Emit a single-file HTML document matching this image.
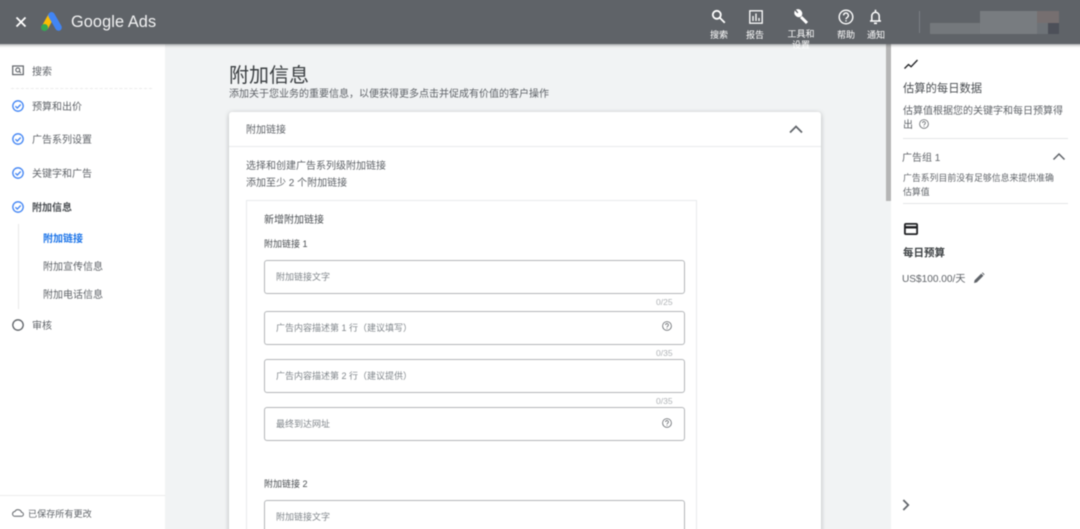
<!DOCTYPE html>
<html lang="zh-CN"><head><meta charset="utf-8"><title>附加信息</title>
<style>
html,body{margin:0;padding:0;width:1080px;height:529px;overflow:hidden;background:#f1f3f4}
body{position:relative;font-family:"Liberation Sans","Noto Sans CJK SC",sans-serif;color:#5f6368}
#w{position:absolute;left:0;top:0;width:1080px;height:529px;filter:blur(.45px)}
.t{position:absolute;white-space:nowrap;line-height:16px;font-size:10px}
.b{position:absolute}
svg{position:absolute;overflow:visible}
.inp{position:absolute;left:264px;width:419px;height:32px;border:1px solid #b4b6b9;border-radius:3px;background:#fff}
.ph{color:#80868b;font-size:9px}
.cnt{color:#b0b3b6;font-size:8.5px}
.hd{color:#fff;font-size:9px;text-align:center}
</style></head><body><div id="w">

<div class="b" style="left:-6px;top:44px;width:171px;height:491px;background:#fff"></div>
<div class="b" style="left:891px;top:44px;width:195px;height:491px;background:#fff"></div>
<div class="b" style="left:886px;top:44px;width:5px;height:157px;background:#b5b5b5"></div>

<!-- sidebar -->
<svg style="left:12px;top:65px" width="13" height="12" viewBox="0 0 13 12" fill="none" stroke="#5f6368"><rect x=".7" y="1" width="10.6" height="8.6" stroke-width="1.2"/><circle cx="5.8" cy="4.9" r="2" stroke-width="1.1"/><path d="M7.300 6.400l1.600 1.600" stroke-width="1.1"/></svg>
<div class="t" style="left:32px;top:65px">搜索</div>
<div class="b" style="left:11px;top:88px;width:141px;border-top:1px dashed #ebebeb"></div>

<svg style="left:12px;top:100px" width="12" height="12" viewBox="0 0 12 12" fill="none" stroke="#4285f4" stroke-width="1.3"><circle cx="6" cy="6" r="5.2"/><path d="M3.400 6.200l1.900 1.900 3.400-3.600"/></svg>
<div class="t" style="left:32px;top:100px">预算和出价</div>
<svg style="left:12px;top:133px" width="12" height="12" viewBox="0 0 12 12" fill="none" stroke="#4285f4" stroke-width="1.3"><circle cx="6" cy="6" r="5.2"/><path d="M3.400 6.200l1.900 1.900 3.400-3.600"/></svg>
<div class="t" style="left:32px;top:133px">广告系列设置</div>
<svg style="left:12px;top:167px" width="12" height="12" viewBox="0 0 12 12" fill="none" stroke="#4285f4" stroke-width="1.3"><circle cx="6" cy="6" r="5.2"/><path d="M3.400 6.200l1.900 1.900 3.400-3.600"/></svg>
<div class="t" style="left:32px;top:167px">关键字和广告</div>
<svg style="left:12px;top:201px" width="12" height="12" viewBox="0 0 12 12" fill="none" stroke="#4285f4" stroke-width="1.3"><circle cx="6" cy="6" r="5.2"/><path d="M3.400 6.200l1.900 1.900 3.400-3.600"/></svg>
<div class="t" style="left:32px;top:201px;font-weight:700;color:#4a4e52">附加信息</div>
<div class="b" style="left:18px;top:224px;width:1px;height:85px;background:#e8e8e8"></div>
<div class="t" style="left:43px;top:232px;font-weight:700;color:#1a73e8">附加链接</div>
<div class="t" style="left:43px;top:260px">附加宣传信息</div>
<div class="t" style="left:43px;top:288px">附加电话信息</div>
<svg style="left:12px;top:319px" width="12" height="12" viewBox="0 0 12 12" fill="none" stroke="#5f6368" stroke-width="1.3"><circle cx="6" cy="6" r="5.2"/></svg>
<div class="t" style="left:32px;top:319px">审核</div>
<div class="b" style="left:-6px;top:495px;width:171px;border-top:1px solid #ececec"></div>
<svg style="left:12px;top:508px" width="12" height="10" viewBox="0 0 12 10" fill="none" stroke="#5f6368" stroke-width="1"><path d="M3 8.300h6.300a2 2 0 0 0 .2-4A3.600 3.600 0 0 0 2.900 3.500 2.400 2.400 0 0 0 3 8.300z"/></svg>
<div class="t" style="left:28px;top:506px;font-size:9.1px">已保存所有更改</div>

<!-- main -->
<div class="t" style="left:229px;top:63px;font-size:20px;line-height:26px;color:#3c4043">附加信息</div>
<div class="t" style="left:229px;top:87px;font-size:10px">添加关于您业务的重要信息，以便获得更多点击并促成有价值的客户操作</div>

<div class="b" style="left:229px;top:112px;width:592px;height:430px;background:#fff;border-radius:3px;box-shadow:0 1px 5px rgba(60,64,67,.35)"></div>
<div class="t" style="left:246px;top:123px;font-size:10px">附加链接</div>
<svg style="left:788px;top:124px" width="16" height="10" viewBox="0 0 16 10" fill="none" stroke="#5f6368" stroke-width="1.7"><path d="M2 8.500l6-6 6 6"/></svg>
<div class="b" style="left:229px;top:146px;width:592px;border-top:1px solid #e8eaed"></div>
<div class="t" style="left:246px;top:159px;font-size:10px">选择和创建广告系列级附加链接</div>
<div class="t" style="left:246px;top:176px;font-size:10px">添加至少 2 个附加链接</div>

<div class="b" style="left:246px;top:200px;width:451px;height:340px;border:1px solid #e8eaed;box-sizing:border-box"></div>
<div class="t" style="left:264px;top:213px;font-size:10px;color:#4a4e52">新增附加链接</div>
<div class="t" style="left:264px;top:236px;font-size:9px;color:#4a4e52">附加链接 1</div>

<div class="inp" style="top:260px"></div>
<div class="t ph" style="left:276px;top:269px">附加链接文字</div>
<div class="t cnt" style="left:656px;top:294px">0/25</div>
<div class="inp" style="top:311px"></div>
<div class="t ph" style="left:276px;top:320px">广告内容描述第 1 行（建议填写）</div>
<svg style="left:662px;top:321px" width="10" height="10" viewBox="0 0 10 10" fill="none" stroke="#5f6368" stroke-width=".8"><circle cx="5" cy="5" r="4.400"/><path d="M3.600 4a1.400 1.400 0 1 1 2.200 1.100c-.5.400-.8.600-.8 1.100M5 7v.8"/></svg>
<div class="t cnt" style="left:656px;top:345px">0/35</div>
<div class="inp" style="top:359px"></div>
<div class="t ph" style="left:276px;top:368px">广告内容描述第 2 行（建议提供）</div>
<div class="t cnt" style="left:656px;top:393px">0/35</div>
<div class="inp" style="top:407px"></div>
<div class="t ph" style="left:276px;top:416px">最终到达网址</div>
<svg style="left:662px;top:418px" width="10" height="10" viewBox="0 0 10 10" fill="none" stroke="#5f6368" stroke-width=".8"><circle cx="5" cy="5" r="4.400"/><path d="M3.600 4a1.400 1.400 0 1 1 2.200 1.100c-.5.400-.8.600-.8 1.100M5 7v.8"/></svg>

<div class="t" style="left:264px;top:476px;font-size:9px;color:#4a4e52">附加链接 2</div>
<div class="inp" style="top:500px"></div>
<div class="t ph" style="left:276px;top:509px">附加链接文字</div>

<!-- right panel -->
<svg style="left:903px;top:58px" width="16" height="12" viewBox="0 0 16 12" fill="none" stroke="#202124" stroke-width="1.300"><path d="M1.500 10.500l4-4 2.600 2.200L14.500 2"/></svg>
<div class="t" style="left:903px;top:81px;font-size:11.3px;color:#4a4e52">估算的每日数据</div>
<div class="t" style="left:903px;top:104px;font-size:10px">估算值根据您的关键字和每日预算得</div>
<div class="t" style="left:903px;top:118px;font-size:10px">出</div>
<svg style="left:919px;top:119px" width="10" height="10" viewBox="0 0 10 10" fill="none" stroke="#5f6368" stroke-width=".8"><circle cx="5" cy="5" r="4.400"/><path d="M3.600 4a1.400 1.400 0 1 1 2.200 1.100c-.5.400-.8.600-.8 1.100M5 7v.8"/></svg>
<div class="b" style="left:903px;top:138px;width:165px;border-top:1px solid #e4e5e7"></div>
<div class="t" style="left:902px;top:151px;font-size:10px">广告组 1</div>
<svg style="left:1052px;top:152px" width="14" height="9" viewBox="0 0 14 9" fill="none" stroke="#5f6368" stroke-width="1.500"><path d="M1.500 7.500l5.500-5.500 5.500 5.500"/></svg>
<div class="t" style="left:903px;top:170px;font-size:8.900px">广告系列目前没有足够信息来提供准确</div>
<div class="t" style="left:903px;top:184px;font-size:8.900px">估算值</div>
<div class="b" style="left:903px;top:203px;width:165px;border-top:1px solid #e4e5e7"></div>
<svg style="left:904px;top:223px" width="14" height="12" viewBox="0 0 14 12" fill="none" stroke="#202124"><rect x=".9" y=".9" width="12.200" height="10.200" rx="1" stroke-width="1.800"/><path d="M1 4.300h12" stroke-width="2.400"/></svg>
<div class="t" style="left:903px;top:245px;font-size:10.500px;font-weight:700;color:#3c4043">每日预算</div>
<div class="t" style="left:902px;top:272px;font-size:10.100px">US$100.00/天</div>
<svg style="left:973px;top:272px" width="12" height="12" viewBox="0 0 12 12" fill="#5f6368"><path d="M1 11l.6-2.800 6.600-6.600 2.200 2.200-6.600 6.600zM8.900 1l.7-.6 2 2-.6.700z"/></svg>
<svg style="left:902px;top:499px" width="8" height="12" viewBox="0 0 8 12" fill="none" stroke="#5f6368" stroke-width="1.700"><path d="M1.300 1l5 5-5 5"/></svg>

<!-- header -->
<div class="b" style="left:-6px;top:-6px;width:1092px;height:50px;background:#5f6368;box-shadow:0 1px 3px rgba(60,64,67,.55)"></div>
<svg style="left:15px;top:16px" width="12" height="12" viewBox="0 0 12 12" fill="none" stroke="#fff" stroke-width="1.800"><path d="M1.500 1.500l9 9M10.500 1.500l-9 9"/></svg>
<svg style="left:41px;top:12px" width="21" height="19" viewBox="0 0 21 19" fill="none"><path d="M10.500 3.500L3.800 15.500" stroke="#fbbc04" stroke-width="6.600"/><path d="M10.500 3.300L17.500 15.500" stroke="#4285f4" stroke-width="6.600" stroke-linecap="round"/><circle cx="3.500" cy="15.500" r="3.500" fill="#34a853"/></svg>
<div class="t" style="left:71px;top:12px;font-size:16.300px;line-height:20px;color:#fff;letter-spacing:.1px;opacity:.92">Google Ads</div>

<svg style="left:711px;top:9px" width="15" height="15" viewBox="0 0 15 15" fill="none" stroke="#fff" stroke-width="1.800"><circle cx="5.800" cy="5.800" r="4"/><path d="M8.800 8.800l5 5"/></svg>
<div class="t hd" style="left:699px;top:27px;width:40px">搜索</div>
<svg style="left:749px;top:10px" width="14" height="14" viewBox="0 0 14 14" fill="none" stroke="#fff"><rect x=".8" y=".8" width="12.400" height="12.400" stroke-width="1.300"/><path d="M4 11V6M7 11V3.500M10 11V8" stroke-width="1.300"/></svg>
<div class="t hd" style="left:735px;top:27px;width:40px">报告</div>
<svg style="left:793px;top:9px" width="16" height="16" viewBox="0 0 16 16" fill="none" stroke="#fff"><path d="M8 8l6 6" stroke-width="3"/><path d="M2 2.500L4.500 5 6 3.500 3.800.8A4 4 0 0 1 8 7a4 4 0 0 1-6-4.500z" fill="#fff" stroke-width="1"/></svg>
<div class="t hd" style="left:787px;top:29px;width:28px;line-height:11px;white-space:normal">工具和设置</div>
<svg style="left:838px;top:9px" width="16" height="16" viewBox="0 0 16 16" fill="none" stroke="#fff" stroke-width="1.400"><circle cx="8" cy="8" r="6.800"/><path d="M5.600 6.300a2.400 2.400 0 1 1 3.800 2c-.9.600-1.400 1-1.400 1.900M8 11.200v1.300"/></svg>
<div class="t hd" style="left:826px;top:27px;width:40px">帮助</div>
<svg style="left:869px;top:9px" width="13" height="16" viewBox="0 0 13 16" fill="none" stroke="#fff" stroke-width="1.500"><path d="M1 12h11M2.800 12V7a3.700 3.700 0 0 1 7.400 0v5"/><path d="M6.500 .8v2M5 14.300h3" stroke-width="1.600"/></svg>
<div class="t hd" style="left:856px;top:27px;width:40px">通知</div>

<div class="b" style="left:919px;top:11px;width:1px;height:22px;background:#7b7f83"></div>
<div class="b" style="left:930px;top:23px;width:50px;height:11px;background:#74787c"></div>
<div class="b" style="left:980px;top:11px;width:66px;height:23px;background:#787c80"></div>
<div class="b" style="left:1037px;top:11px;width:22px;height:12px;background:#766f70"></div>
<div class="b" style="left:1037px;top:23px;width:11px;height:11px;background:#6d7277"></div>
<div class="b" style="left:1048px;top:23px;width:11px;height:11px;background:#4d5059"></div>
</div></body></html>
